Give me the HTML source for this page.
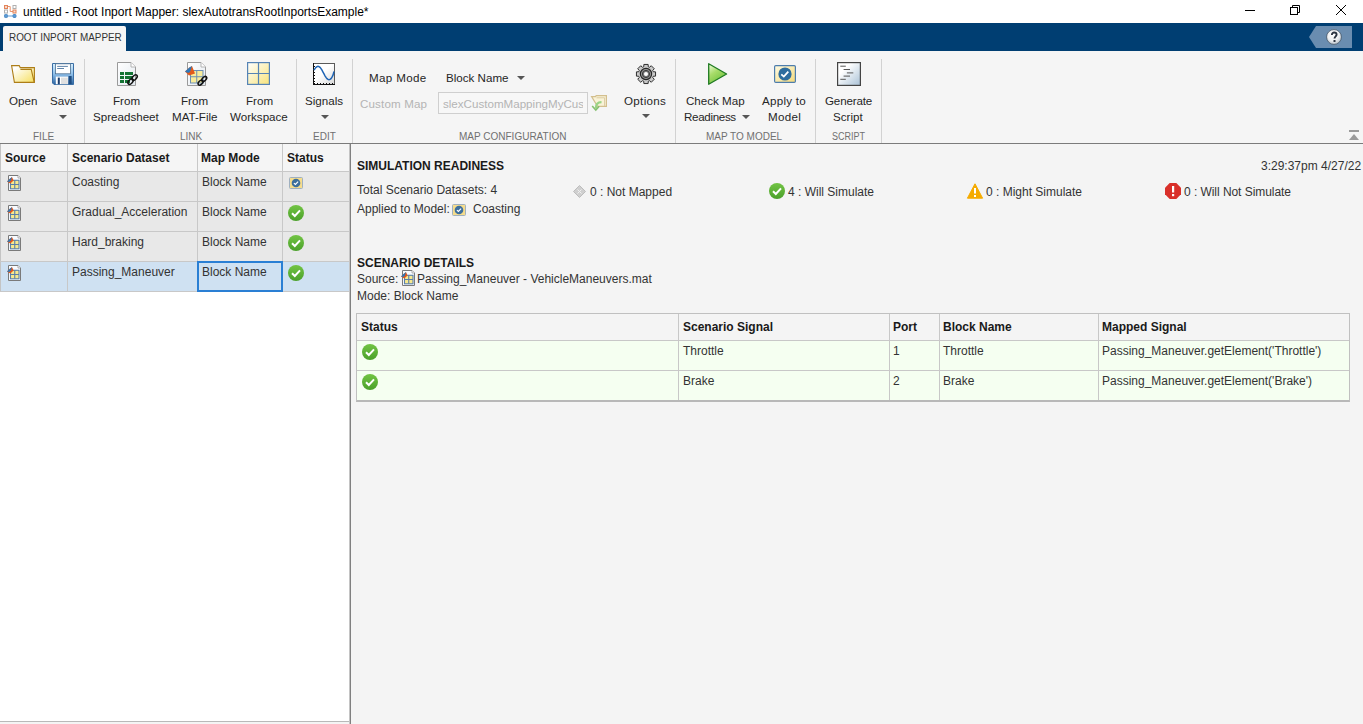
<!DOCTYPE html>
<html><head><meta charset="utf-8">
<style>
*{box-sizing:border-box}
html,body{margin:0;padding:0}
body{width:1363px;height:724px;position:relative;overflow:hidden;background:#fff;font-family:"Liberation Sans",sans-serif;color:#000}
.a{position:absolute;white-space:nowrap}
.rt{font-size:11.6px;color:#262626;line-height:14px}
.gl{font-size:10px;color:#707070;line-height:12px}
.sep{position:absolute;top:59px;width:1px;height:84px;background:#d2d2d2}
.arr{position:absolute;width:0;height:0;border-left:4px solid transparent;border-right:4px solid transparent;border-top:4px solid #555}
.lt{font-size:12px;color:#333;line-height:14px}
.hd{font-size:12px;font-weight:bold;color:#1a1a1a;line-height:14px}
svg{position:absolute;overflow:visible}
</style></head><body>
<svg style="position:absolute;left:0;top:0;width:0;height:0">
 <defs>
  <linearGradient id="cg" x1="0" y1="0" x2="0" y2="1"><stop offset="0" stop-color="#72c444"/><stop offset="1" stop-color="#4aa02a"/></linearGradient>
  <symbol id="chk" viewBox="0 0 16 16">
   <circle cx="8" cy="8" r="8" fill="url(#cg)"/>
   <path d="M4 8.3 L6.8 11 L12 5.3" fill="none" stroke="#fff" stroke-width="2"/>
  </symbol>
  <symbol id="appic" viewBox="0 0 14 12">
   <rect x="0.5" y="0.5" width="13" height="11" rx="1" fill="#f5dc8c" stroke="#9fb0c0" stroke-width="1"/>
   <circle cx="7" cy="6" r="4.3" fill="#3d6f9c"/>
   <path d="M4.9 6.1 L6.4 7.5 L9.1 4.6" fill="none" stroke="#fff" stroke-width="1.2"/>
  </symbol>
  <symbol id="matic" viewBox="0 0 14 16">
   <path d="M1.5 0.5 H11 L13.5 3 V15.5 H1.5 Z" fill="#f8fbff" stroke="#7a7a7a" stroke-width="1"/>
   <path d="M11 0.5 V3 H13.5" fill="#fff" stroke="#9a9a9a" stroke-width="0.8"/>
   <rect x="3.5" y="5.3" width="8.5" height="8.5" fill="#f7e98e" stroke="#5b7fa8" stroke-width="1.1"/>
   <path d="M7.75 5.3 V13.8 M3.5 9.55 H12" stroke="#5b7fa8" stroke-width="1.1"/>
   <path d="M0 6.5 L3.2 3.6 L5 2 L6.6 5.6 L3.3 8.6 Z" fill="#e0571c"/>
   <path d="M0 6.5 L3.2 3.6 L5 2 L3.8 5.8 L2.2 7 Z" fill="#2b78b8"/>
  </symbol>
 </defs>
</svg>


<!-- TITLE BAR -->
<svg style="left:4px;top:5px" width="13" height="13" viewBox="0 0 13 13">
  <path d="M3 1.5 H6.2 V6.5 H10" fill="none" stroke="#e8936c" stroke-width="1"/>
  <rect x="0.5" y="0.5" width="3" height="3" fill="#f8d8c8" stroke="#e3845a" stroke-width="1"/>
  <rect x="9" y="0.5" width="3" height="3" fill="#fff" stroke="#b0b0b0" stroke-width="1"/>
  <rect x="0.5" y="5" width="3" height="3" fill="#fff" stroke="#b0b0b0" stroke-width="1"/>
  <rect x="9" y="5" width="3" height="3" fill="#f8d8c8" stroke="#e3845a" stroke-width="1"/>
  <path d="M3.5 11 H9" stroke="#9cc2e6" stroke-width="1.6"/>
  <rect x="0.5" y="9.5" width="3" height="3" rx="0.8" fill="#5a9ad4" stroke="#4f8cc6" stroke-width="1"/>
  <rect x="9" y="9.5" width="3" height="3" rx="0.8" fill="#5a9ad4" stroke="#4f8cc6" stroke-width="1"/>
</svg>
<div class="a" style="left:23px;top:5px;font-size:12px;line-height:14px;color:#000">untitled - Root Inport Mapper: slexAutotransRootInportsExample*</div>
<!-- window controls -->
<div class="a" style="left:1245px;top:10px;width:10px;height:1px;background:#000"></div>
<svg style="left:1290px;top:5px" width="10" height="10" viewBox="0 0 10 10">
  <rect x="0.5" y="2.5" width="7" height="7" fill="none" stroke="#000" stroke-width="1"/>
  <path d="M2.5 2.5 V0.5 H9.5 V7.5 H7.5" fill="none" stroke="#000" stroke-width="1"/>
</svg>
<svg style="left:1336px;top:5px" width="10" height="10" viewBox="0 0 10 10">
  <path d="M0 0 L10 10 M10 0 L0 10" stroke="#000" stroke-width="1"/>
</svg>

<!-- BLUE BAR -->
<div class="a" style="left:0;top:23px;width:1363px;height:28px;background:#003e72"></div>
<div class="a" style="left:3px;top:26px;width:123px;height:25px;background:#f5f5f5;border-radius:2px 2px 0 0"></div>
<div class="a" style="left:8.5px;top:31px;font-size:11px;line-height:12px;color:#333;transform:scaleX(0.9);transform-origin:0 0">ROOT INPORT MAPPER</div>
<svg style="left:1309px;top:26px" width="43" height="22" viewBox="0 0 43 22">
  <path d="M0 11 L7 0 H43 V22 H7 Z" fill="#6a8db0"/>
  <defs><radialGradient id="hg" cx="0.45" cy="0.35" r="0.65"><stop offset="0" stop-color="#ffffff"/><stop offset="0.6" stop-color="#eef0f2"/><stop offset="1" stop-color="#b9c3cc"/></radialGradient></defs>
  <circle cx="25" cy="11" r="7.4" fill="url(#hg)" stroke="#3b4a5a" stroke-width="0.7"/>
  <path d="M22.9 9 C22.9 7.4 23.9 6.5 25.2 6.5 C26.6 6.5 27.6 7.4 27.6 8.6 C27.6 10.3 25.5 10.5 25.5 12.6" fill="none" stroke="#2a3340" stroke-width="1.9"/>
  <rect x="24.5" y="14" width="2" height="2" fill="#2a3340"/>
</svg>

<!-- RIBBON -->
<div class="a" style="left:0;top:51px;width:1363px;height:92px;background:#f5f5f5"></div>
<div class="a" style="left:0;top:143px;width:1363px;height:1px;background:#7b7b7b"></div>

<div class="sep" style="left:84px"></div>
<div class="sep" style="left:296px"></div>
<div class="sep" style="left:352px"></div>
<div class="sep" style="left:675px"></div>
<div class="sep" style="left:815px"></div>
<div class="sep" style="left:881px"></div>

<!-- FILE group -->
<svg style="left:11px;top:65px" width="24" height="18" viewBox="0 0 24 18">
  <defs><linearGradient id="fg" x1="0" y1="0" x2="1" y2="1"><stop offset="0.15" stop-color="#ffffff"/><stop offset="1" stop-color="#f6df5e"/></linearGradient></defs>
  <path d="M0.6 0.6 H8.2 L9.2 2.6 H23.4 V17.4 H3.4 Z" fill="url(#fg)" stroke="#ad7d17" stroke-width="1.1"/>
  <path d="M9.4 4.4 H20.2 L23.2 17.2" fill="none" stroke="#ad7d17" stroke-width="1.1"/>
</svg>
<svg style="left:52px;top:63px" width="22" height="22" viewBox="0 0 22 22">
  <defs><linearGradient id="sg" x1="0" y1="0" x2="0" y2="1"><stop offset="0" stop-color="#d8f0ff"/><stop offset="0.5" stop-color="#8fc0ea"/><stop offset="1" stop-color="#2b63a0"/></linearGradient></defs>
  <path d="M0.5 0.5 H21.5 V21.5 H2 L0.5 20 Z" fill="url(#sg)" stroke="#3a6ea5" stroke-width="1"/>
  <rect x="3.5" y="0.8" width="15" height="10" fill="#fff" stroke="#4d6f90" stroke-width="0.8"/>
  <path d="M5.2 3.4 H15.9 M5.2 5.5 H12" stroke="#4f77a0" stroke-width="0.9"/>
  <rect x="3.8" y="13.6" width="12.4" height="7.6" fill="#fff"/>
  <rect x="5.8" y="14.6" width="2" height="6.6" fill="#1d3f6e"/>
  <rect x="9" y="14.6" width="6.8" height="6.4" fill="#e0e0e0"/>
  <rect x="16.6" y="13" width="3" height="8" fill="#1f4c80"/>
</svg>
<div class="a rt" style="left:9px;top:94px">Open</div>
<div class="a rt" style="left:50px;top:94px">Save</div>
<div class="arr" style="left:59px;top:115px"></div>
<div class="a gl" style="left:33px;top:131px">FILE</div>

<!-- LINK group -->
<svg style="left:117px;top:62px" width="22" height="24" viewBox="0 0 22 24">
  <defs><linearGradient id="pgw" x1="0" y1="0" x2="1" y2="1"><stop offset="0" stop-color="#ffffff"/><stop offset="1" stop-color="#e4eaf0"/></linearGradient></defs>
  <path d="M0.5 0.5 H14 L18.5 5 V23.5 H0.5 Z" fill="url(#pgw)" stroke="#9a9a9a" stroke-width="1"/>
  <path d="M14 0.5 V5 H18.5" fill="#fff" stroke="#b4b4b4" stroke-width="1"/>
  <g fill="#137333">
  <rect x="3" y="10" width="4" height="3"/><rect x="8" y="10" width="8" height="3"/>
  <rect x="3" y="14" width="4" height="3"/><rect x="8" y="14" width="8" height="3"/>
  <rect x="3" y="18" width="4" height="3"/><rect x="8" y="18" width="5" height="3"/>
  </g>
  <ellipse cx="13.6" cy="19.6" rx="3.2" ry="1.9" transform="rotate(-45 13.6 19.6)" fill="none" stroke="#111" stroke-width="1.5"/>
  <ellipse cx="17.6" cy="15.6" rx="3.2" ry="1.9" transform="rotate(-45 17.6 15.6)" fill="none" stroke="#111" stroke-width="1.5"/>
</svg>
<svg style="left:185px;top:62px" width="22" height="24" viewBox="0 0 22 24">
  <path d="M2.5 0.5 H16 L20.5 5 V23.5 H2.5 Z" fill="url(#pgw)" stroke="#9a9a9a" stroke-width="1"/>
  <path d="M16 0.5 V5 H20.5" fill="#fff" stroke="#b4b4b4" stroke-width="1"/>
  <rect x="5.5" y="8.5" width="12.5" height="12.5" fill="#f8ec9c" stroke="#6c8fb5" stroke-width="1"/>
  <path d="M11.75 8.5 V21 M5.5 14.75 H18" stroke="#6c8fb5" stroke-width="1"/>
  <path d="M0 9.5 L4.5 5.5 L7 4 L10 11.5 L4 13.5 Z" fill="#e25a1c"/>
  <path d="M0 9.5 L4.5 5.5 L7 4 L5 10 L3 11 Z" fill="#2f78b8"/>
  <ellipse cx="15.6" cy="20.6" rx="3" ry="1.8" transform="rotate(-45 15.6 20.6)" fill="none" stroke="#111" stroke-width="1.5"/>
  <ellipse cx="19.2" cy="17" rx="3" ry="1.8" transform="rotate(-45 19.2 17)" fill="none" stroke="#111" stroke-width="1.5"/>
</svg>
<svg style="left:247px;top:62px" width="23" height="23" viewBox="0 0 23 23">
  <defs><linearGradient id="wg" x1="0" y1="0" x2="1" y2="1"><stop offset="0" stop-color="#ffffff"/><stop offset="1" stop-color="#f7e37a"/></linearGradient></defs>
  <rect x="0.6" y="0.6" width="21.8" height="21.8" fill="url(#wg)" stroke="#5684b5" stroke-width="1.2"/>
  <path d="M11.5 0.5 V22.5 M0.5 11.5 H22.5" stroke="#5684b5" stroke-width="1.2"/>
</svg>
<div class="a rt" style="left:113px;top:94px">From</div>
<div class="a rt" style="left:93px;top:110px">Spreadsheet</div>
<div class="a rt" style="left:181px;top:94px">From</div>
<div class="a rt" style="left:172px;top:110px">MAT-File</div>
<div class="a rt" style="left:246px;top:94px">From</div>
<div class="a rt" style="left:230px;top:110px">Workspace</div>
<div class="a gl" style="left:180px;top:131px">LINK</div>

<!-- EDIT group -->
<svg style="left:313px;top:63px" width="22" height="22" viewBox="0 0 22 22">
  <defs><linearGradient id="ig" x1="0" y1="0" x2="1" y2="1"><stop offset="0.45" stop-color="#fff"/><stop offset="1" stop-color="#d6d6d6"/></linearGradient></defs>
  <rect x="0.5" y="0.5" width="21" height="21" fill="url(#ig)" stroke="#5a5a5a" stroke-width="1"/>
  <path d="M0.5 0 V22 M0 21.5 H22" stroke="#111" stroke-width="1"/>
  <path d="M1.5 3 V21 M1 20.5 H21" stroke="#111" stroke-width="1" stroke-dasharray="1 2"/>
  <path d="M1.0 7.22 L2.0 5.61 L3.0 4.36 L4.0 3.57 L5.0 3.30 L6.0 3.57 L7.0 4.36 L8.0 5.61 L9.0 7.22 L10.0 9.05 L11.0 10.95 L12.0 12.78 L13.0 14.39 L14.0 15.64 L15.0 16.43 L16.0 16.70 L17.0 16.43 L18.0 15.64 L19.0 14.2 L20.0 12.2 L21.0 8.5" fill="none" stroke="#1f64b4" stroke-width="1.5"/>
</svg>
<div class="a rt" style="left:305px;top:94px">Signals</div>
<div class="arr" style="left:321px;top:115px"></div>
<div class="a gl" style="left:313px;top:131px">EDIT</div>

<!-- MAP CONFIGURATION group -->
<div class="a rt" style="left:369px;top:71px;letter-spacing:0.36px">Map Mode</div>
<div class="a rt" style="left:446px;top:71px">Block Name</div>
<div class="arr" style="left:517px;top:76px"></div>
<div class="a rt" style="left:360px;top:97px;color:#b4b4b4;letter-spacing:0.15px">Custom Map</div>
<div class="a" style="left:438px;top:92px;width:150px;height:22px;border:1px solid #cfcfcf;background:#f7f7f7"></div>
<div class="a rt" style="left:443px;top:97px;color:#b4b4b4;width:140px;overflow:hidden">slexCustomMappingMyCustom</div>
<svg style="left:591px;top:95px" width="16" height="16" viewBox="0 0 16 16">
  <path d="M0.6 1.6 H4.5 L5.2 0.6 H15.4 V11.4 H6.5 L0.6 1.6 Z" fill="#f9f3d8" stroke="#d3bf8e" stroke-width="1.2"/>
  <path d="M5.5 2.8 H13.6 V11" fill="none" stroke="#dccba2" stroke-width="1"/>
  <path d="M10.5 7.2 C6.5 7.2 4.8 9.2 4.8 13.5" stroke="#9ad486" stroke-width="2.2" fill="none"/>
  <path d="M1.2 11 L4.8 15 L8.2 11.2" stroke="#86c070" stroke-width="1.6" fill="none"/>
</svg>
<svg style="left:636px;top:64px" width="20" height="20" viewBox="0 0 20 20">
  <path d="M7.75 2.74 L7.86 0.44 L12.14 0.44 L12.25 2.74 L13.55 3.28 L15.25 1.73 L18.27 4.75 L16.72 6.45 L17.26 7.75 L19.56 7.86 L19.56 12.14 L17.26 12.25 L16.72 13.55 L18.27 15.25 L15.25 18.27 L13.55 16.72 L12.25 17.26 L12.14 19.56 L7.86 19.56 L7.75 17.26 L6.45 16.72 L4.75 18.27 L1.73 15.25 L3.28 13.55 L2.74 12.25 L0.44 12.14 L0.44 7.86 L2.74 7.75 L3.28 6.45 L1.73 4.75 L4.75 1.73 L6.45 3.28 Z" fill="#c9c9c9" stroke="#2f2f2f" stroke-width="1"/>
  <circle cx="10" cy="10" r="5.6" fill="#9a9a9a" stroke="#262626" stroke-width="1.2"/>
  <circle cx="10" cy="10" r="3.6" fill="#7a7a7a" stroke="#3a3a3a" stroke-width="1"/>
  <circle cx="10" cy="10" r="2" fill="#fff"/>
</svg>
<div class="a rt" style="left:624px;top:94px;letter-spacing:0.32px">Options</div>
<div class="arr" style="left:642px;top:114px"></div>
<div class="a gl" style="left:459px;top:131px">MAP CONFIGURATION</div>

<!-- MAP TO MODEL group -->
<svg style="left:708px;top:63px" width="20" height="22" viewBox="0 0 20 22">
  <defs><linearGradient id="pg" x1="0" y1="0" x2="0.6" y2="1"><stop offset="0" stop-color="#f0ffe0"/><stop offset="0.45" stop-color="#a8dc6a"/><stop offset="1" stop-color="#6cc03a"/></linearGradient></defs>
  <path d="M0.7 0.7 L18.6 11 L0.7 21.3 Z" fill="url(#pg)" stroke="#1f7a22" stroke-width="1.3" stroke-linejoin="round"/>
</svg>
<svg style="left:774px;top:65px" width="22" height="18" viewBox="0 0 22 18">
  <defs><linearGradient id="ag" x1="0" y1="0" x2="1" y2="1"><stop offset="0" stop-color="#fffbe4"/><stop offset="1" stop-color="#f4d97a"/></linearGradient></defs>
  <rect x="0.6" y="0.6" width="20.8" height="16.8" rx="1.2" fill="url(#ag)" stroke="#4d7dad" stroke-width="1.2"/>
  <circle cx="11" cy="9" r="6.6" fill="#2f6d9e"/>
  <path d="M7.3 9.4 L9.8 11.6 L14.3 6.6" fill="none" stroke="#fff" stroke-width="1.8"/>
</svg>
<div class="a rt" style="left:686px;top:94px">Check Map</div>
<div class="a rt" style="left:684px;top:110px;letter-spacing:-0.33px">Readiness</div>
<div class="arr" style="left:742px;top:115px"></div>
<div class="a rt" style="left:762px;top:94px;letter-spacing:0.25px">Apply to</div>
<div class="a rt" style="left:768px;top:110px;letter-spacing:0.3px">Model</div>
<div class="a gl" style="left:706px;top:131px">MAP TO MODEL</div>

<!-- SCRIPT group -->
<svg style="left:837px;top:62px" width="24" height="24" viewBox="0 0 24 24">
  <defs><linearGradient id="scg" x1="0" y1="0" x2="1" y2="1"><stop offset="0.3" stop-color="#ffffff"/><stop offset="1" stop-color="#a9c1d6"/></linearGradient></defs>
  <rect x="0.6" y="0.6" width="22.8" height="22.8" fill="url(#scg)" stroke="#444" stroke-width="1.2"/>
  <path d="M3.3 4.2 H8.8 M6.6 7.5 H13 M9.9 10.9 H16.3 M6.6 14.1 H13 M3.3 17.3 H8.8" stroke="#555" stroke-width="1"/>
</svg>
<div class="a rt" style="left:825px;top:94px;letter-spacing:-0.15px">Generate</div>
<div class="a rt" style="left:833px;top:110px">Script</div>
<div class="a gl" style="left:832px;top:131px;transform:scaleX(0.9);transform-origin:0 0">SCRIPT</div>

<!-- collapse -->
<div class="a" style="left:1349px;top:130px;width:10px;height:2px;background:#9a9a9a"></div>
<div class="a" style="left:1349px;top:134px;width:0;height:0;border-left:5px solid transparent;border-right:5px solid transparent;border-bottom:6px solid #9a9a9a"></div>

<!-- LEFT PANEL -->
<div class="a" style="left:0;top:144px;width:350px;height:578px;background:#fff"></div>
<div class="a" style="left:0;top:721px;width:350px;height:1px;background:#b9b9b9"></div>
<div class="a" style="left:0;top:722px;width:350px;height:2px;background:#f4f4f4"></div>
<div class="a" style="left:349px;top:144px;width:1px;height:580px;background:#c4c4c4"></div>
<div class="a" style="left:350px;top:144px;width:1px;height:580px;background:#808080"></div>

<!-- RIGHT PANEL -->
<div class="a" style="left:351px;top:144px;width:1012px;height:580px;background:#f4f4f4"></div>


<!-- LEFT TABLE -->
<div class="a" style="left:0;top:144px;width:349px;height:27px;background:#f5f5f5"></div>
<div class="a" style="left:0;top:172px;width:349px;height:89px;background:#e8e8e8"></div>
<div class="a" style="left:0;top:262px;width:349px;height:29px;background:#cfe1f2"></div>
<div class="a" style="left:0;top:144px;width:1px;height:147px;background:#c4c4c4"></div>
<div class="a" style="left:67px;top:144px;width:1px;height:147px;background:#c8c8c8"></div>
<div class="a" style="left:197px;top:144px;width:1px;height:147px;background:#c8c8c8"></div>
<div class="a" style="left:282px;top:144px;width:1px;height:147px;background:#c8c8c8"></div>
<div class="a" style="left:0;top:171px;width:349px;height:1px;background:#c8c8c8"></div>
<div class="a" style="left:0;top:201px;width:349px;height:1px;background:#c8c8c8"></div>
<div class="a" style="left:0;top:231px;width:349px;height:1px;background:#c8c8c8"></div>
<div class="a" style="left:0;top:261px;width:349px;height:1px;background:#c8c8c8"></div>
<div class="a" style="left:0;top:291px;width:349px;height:1px;background:#c8c8c8"></div>
<div class="a" style="left:197px;top:261px;width:86px;height:31px;border:2px solid #2a7fd4"></div>
<div class="a hd" style="left:5px;top:151px">Source</div>
<div class="a hd" style="left:72px;top:151px">Scenario Dataset</div>
<div class="a hd" style="left:201px;top:151px">Map Mode</div>
<div class="a hd" style="left:287px;top:151px">Status</div>
<svg style="left:7px;top:175px" width="14" height="16"><use href="#matic"/></svg>
<div class="a lt" style="left:72px;top:175px">Coasting</div>
<div class="a lt" style="left:202px;top:175px">Block Name</div>
<svg style="left:289px;top:177px" width="14" height="12"><use href="#appic"/></svg>
<svg style="left:7px;top:205px" width="14" height="16"><use href="#matic"/></svg>
<div class="a lt" style="left:72px;top:205px">Gradual_Acceleration</div>
<div class="a lt" style="left:202px;top:205px">Block Name</div>
<svg style="left:288px;top:205px" width="16" height="16"><use href="#chk"/></svg>
<svg style="left:7px;top:235px" width="14" height="16"><use href="#matic"/></svg>
<div class="a lt" style="left:72px;top:235px">Hard_braking</div>
<div class="a lt" style="left:202px;top:235px">Block Name</div>
<svg style="left:288px;top:235px" width="16" height="16"><use href="#chk"/></svg>
<svg style="left:7px;top:265px" width="14" height="16"><use href="#matic"/></svg>
<div class="a lt" style="left:72px;top:265px">Passing_Maneuver</div>
<div class="a lt" style="left:202px;top:265px">Block Name</div>
<svg style="left:288px;top:265px" width="16" height="16"><use href="#chk"/></svg>

<!-- RIGHT CONTENT -->
<div class="a hd" style="left:357px;top:159px">SIMULATION READINESS</div>
<div class="a lt" style="left:1261px;top:159px">3:29:37pm 4/27/22</div>
<div class="a lt" style="left:357px;top:183px">Total Scenario Datasets: 4</div>
<div class="a lt" style="left:357px;top:202px">Applied to Model:</div>
<svg style="left:452px;top:204px" width="14" height="12"><use href="#appic"/></svg>
<div class="a lt" style="left:473px;top:202px">Coasting</div>
<svg style="left:573px;top:185px" width="13" height="13" viewBox="0 0 13 13">
  <path d="M6.5 0.5 L12.5 6.5 L6.5 12.5 L0.5 6.5 Z" fill="#cfcfcf" stroke="#bdbdbd" stroke-width="1"/>
  <path d="M4.5 4.5 L8.5 8.5 M8.5 4.5 L4.5 8.5" stroke="#f0f0f0" stroke-width="1"/>
</svg>
<div class="a lt" style="left:590px;top:185px">0 : Not Mapped</div>
<svg style="left:769px;top:183px" width="16" height="16"><use href="#chk"/></svg>
<div class="a lt" style="left:788px;top:185px">4 : Will Simulate</div>
<svg style="left:967px;top:183px" width="16" height="16" viewBox="0 0 16 16">
  <path d="M8 0.8 L15.6 15.2 H0.4 Z" fill="#f5ab00" stroke="#f5ab00" stroke-width="1" stroke-linejoin="round"/>
  <rect x="7" y="5" width="2" height="5.5" fill="#fff"/><rect x="7" y="12" width="2" height="2" fill="#fff"/>
</svg>
<div class="a lt" style="left:986px;top:185px">0 : Might Simulate</div>
<svg style="left:1165px;top:183px" width="16" height="16" viewBox="0 0 16 16">
  <path d="M4.7 0 H11.3 L16 4.7 V11.3 L11.3 16 H4.7 L0 11.3 V4.7 Z" fill="#d9302a"/>
  <rect x="7" y="3" width="2.2" height="6.5" fill="#fff"/><rect x="7" y="11" width="2.2" height="2.2" fill="#fff"/>
</svg>
<div class="a lt" style="left:1184px;top:185px;letter-spacing:-0.05px">0 : Will Not Simulate</div>

<div class="a hd" style="left:357px;top:256px">SCENARIO DETAILS</div>
<div class="a lt" style="left:357px;top:272px">Source:</div>
<svg style="left:401px;top:270px" width="14" height="16"><use href="#matic"/></svg>
<div class="a lt" style="left:417px;top:272px">Passing_Maneuver - VehicleManeuvers.mat</div>
<div class="a lt" style="left:357px;top:289px">Mode: Block Name</div>

<!-- detail table -->
<div class="a" style="left:356px;top:313px;width:994px;height:89px;background:#f5fff1;border:1px solid #c0c0c0;border-bottom:2px solid #b8b8b8"></div>
<div class="a" style="left:357px;top:314px;width:992px;height:26px;background:#f4f4f4"></div>
<div class="a" style="left:357px;top:340px;width:992px;height:1px;background:#c8c8c8"></div>
<div class="a" style="left:357px;top:370px;width:992px;height:1px;background:#c8c8c8"></div>
<div class="a" style="left:678px;top:314px;width:1px;height:86px;background:#c8c8c8"></div>
<div class="a" style="left:889px;top:314px;width:1px;height:86px;background:#c8c8c8"></div>
<div class="a" style="left:939px;top:314px;width:1px;height:86px;background:#c8c8c8"></div>
<div class="a" style="left:1098px;top:314px;width:1px;height:86px;background:#c8c8c8"></div>
<div class="a hd" style="left:361px;top:320px">Status</div>
<div class="a hd" style="left:683px;top:320px">Scenario Signal</div>
<div class="a hd" style="left:893px;top:320px">Port</div>
<div class="a hd" style="left:943px;top:320px">Block Name</div>
<div class="a hd" style="left:1102px;top:320px">Mapped Signal</div>
<svg style="left:362px;top:344px" width="16" height="16"><use href="#chk"/></svg>
<svg style="left:362px;top:374px" width="16" height="16"><use href="#chk"/></svg>
<div class="a lt" style="left:683px;top:344px">Throttle</div>
<div class="a lt" style="left:893px;top:344px">1</div>
<div class="a lt" style="left:943px;top:344px">Throttle</div>
<div class="a lt" style="left:1102px;top:344px">Passing_Maneuver.getElement('Throttle')</div>
<div class="a lt" style="left:683px;top:374px">Brake</div>
<div class="a lt" style="left:893px;top:374px">2</div>
<div class="a lt" style="left:943px;top:374px">Brake</div>
<div class="a lt" style="left:1102px;top:374px">Passing_Maneuver.getElement('Brake')</div>
</body></html>
